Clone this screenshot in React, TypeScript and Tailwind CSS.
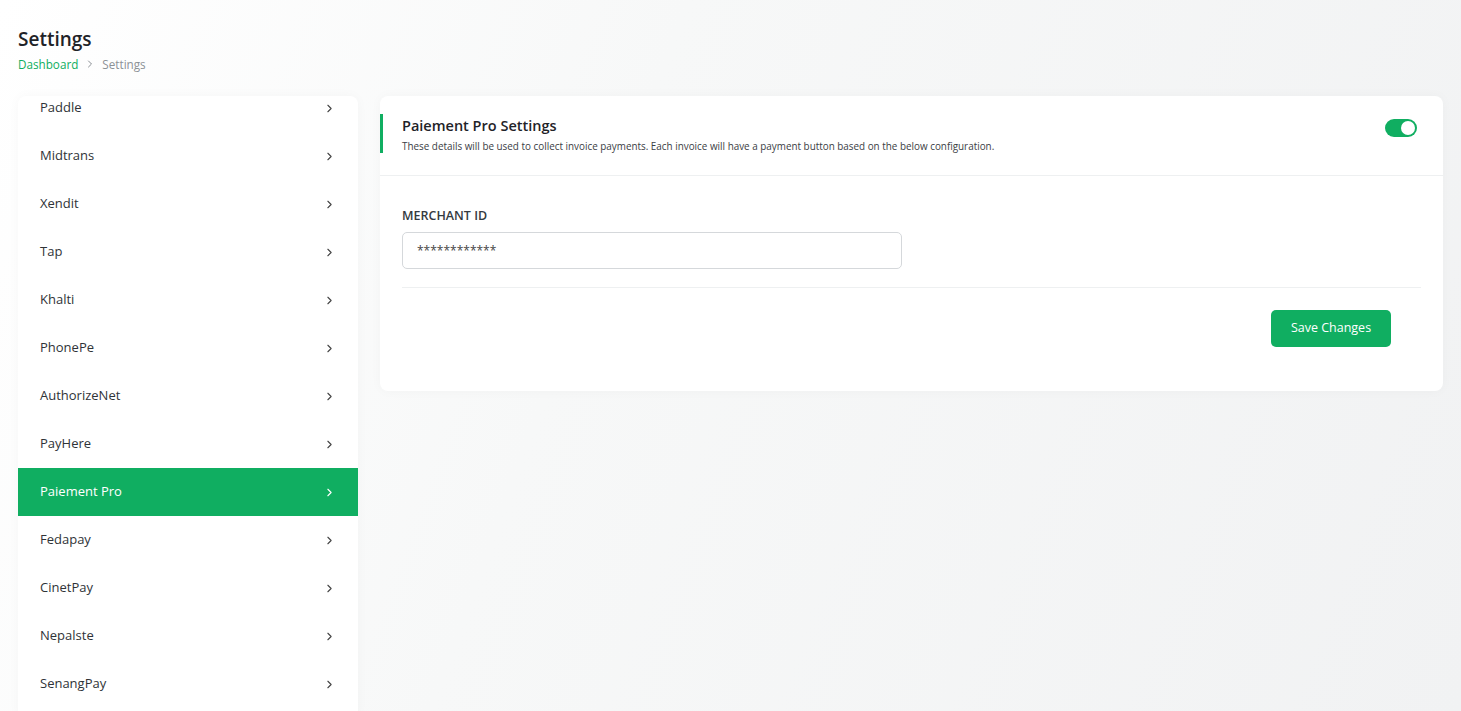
import React from "react";
import { ChevronRight } from "lucide-react";

const gateways = [
  "Paddle",
  "Midtrans",
  "Xendit",
  "Tap",
  "Khalti",
  "PhonePe",
  "AuthorizeNet",
  "PayHere",
  "Paiement Pro",
  "Fedapay",
  "CinetPay",
  "Nepalste",
  "SenangPay",
];

const App: React.FC = () => {
  const active = "Paiement Pro";

  return (
    <div
      className="h-[711px] overflow-hidden bg-[linear-gradient(110deg,#ffffff_0%,#f7f8f8_40%,#f1f2f3_100%)] text-[#212529]"
      style={{ fontFamily: '"Open Sans", "Noto Sans", sans-serif' }}
    >
      <div className="px-[18px] pt-[27px]">
        {/* Page header */}
        <h1 className="text-[19px] font-semibold leading-[24px] text-[#1f2328]">Settings</h1>
        <div className="mt-[5px] flex items-center text-[11.7px] leading-[16px]">
          <span className="text-[#10ae61]">Dashboard</span>
          <ChevronRight size={12} className="mx-[6px] text-[#8a8f94]" strokeWidth={2} />
          <span className="text-[#8c9196]">Settings</span>
        </div>

        <div className="mt-[24px] flex items-start gap-[22px]">
          {/* Sidebar */}
          <div className="h-[620px] w-[340px] shrink-0 overflow-hidden rounded-t-[8px] bg-white shadow-[0_0_12px_rgba(0,0,0,0.03)]">
            <ul className="-mt-[12px]">
              {gateways.map((name) => {
                const isActive = name === active;
                return (
                  <li
                    key={name}
                    className={`flex h-[48px] items-center justify-between pl-[22px] pr-[22px] text-[13px] ${
                      isActive ? "bg-[#10ae61] text-white" : "text-[#2f3337]"
                    }`}
                  >
                    <span>{name}</span>
                    <ChevronRight size={13} strokeWidth={2} className={isActive ? "text-white" : "text-[#444]"} />
                  </li>
                );
              })}
            </ul>
          </div>

          {/* Settings card */}
          <div className="flex-1 rounded-[8px] bg-white shadow-[0_0_12px_rgba(0,0,0,0.03)]">
            <div className="flex items-start justify-between border-b border-[#eef0f1] pt-[18px] pb-[22px] pr-[26px]">
              <div className="border-l-[3px] border-[#10ae61] pl-[19px]">
                <h2 className="text-[14.5px] font-semibold leading-[24px] text-[#1f2328]">Paiement Pro Settings</h2>
                <p className="mt-[1px] text-[9.9px] leading-[14px] text-[#3b4045]">
                  These details will be used to collect invoice payments. Each invoice will have a payment button based on the below configuration.
                </p>
              </div>
              <div className="mt-[5px] flex h-[18px] w-[32px] items-center justify-end rounded-full bg-[#10ae61] pr-[2px]">
                <div className="h-[14px] w-[14px] rounded-full bg-white" />
              </div>
            </div>

            <div className="px-[22px] pt-[31px] pb-[44px]">
              <label className="block text-[12.5px] font-semibold leading-[18px] text-[#343a40]">MERCHANT ID</label>
              <div className="mt-[7px] flex h-[37px] w-[500px] items-center rounded-[5px] border border-[#d5d8db] px-[14px] text-[12px] text-[#444]">
                ************
              </div>
              <div className="mt-[18px] border-t border-[#eef0f1]" />
              <div className="mt-[22px] flex justify-end pr-[30px]">
                <button className="h-[37px] w-[120px] rounded-[5px] bg-[#10ae61] text-[12.5px] font-medium text-white">
                  Save Changes
                </button>
              </div>
            </div>
          </div>
        </div>
      </div>
    </div>
  );
};

export default App;
